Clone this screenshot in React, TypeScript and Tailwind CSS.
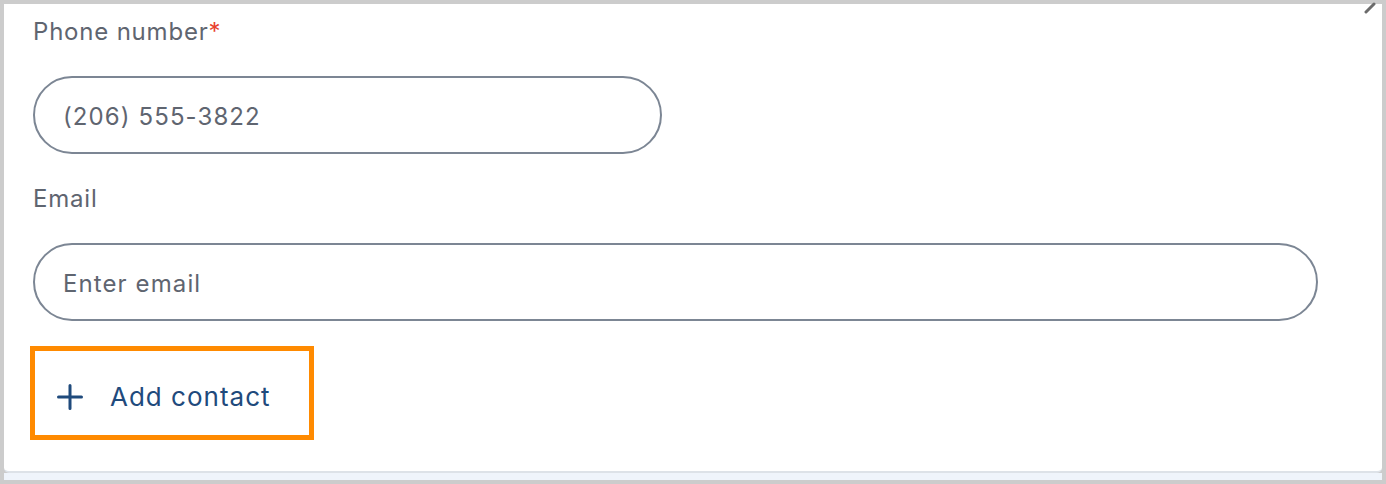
import { useState } from 'react';

const Field = ({
  label,
  required,
  value,
  placeholder,
  width,
}: {
  label: string;
  required?: boolean;
  value?: string;
  placeholder?: string;
  width: string;
}) => {
  const [text, setText] = useState(value ?? '');
  return (
    <div className="flex flex-col pb-[28px]">
      <label className="pt-[2px] text-[24px] leading-[30px] tracking-[0.8px] text-[#5f6570]">
        {label}
        {required && <span className="text-[#e8412f]">*</span>}
      </label>
      <input
        type="text"
        value={text}
        placeholder={placeholder}
        onChange={(e) => setText(e.target.value)}
        className={`${width} mt-[29px] h-[78px] rounded-full border-2 border-[#7c8694] bg-white px-[28px] pt-[2px] text-[24px] tracking-[1.1px] text-[#5f6570] placeholder:text-[#5f6570] focus:outline-none`}
      />
    </div>
  );
};

export default function App() {
  return (
    <div className="h-[484px] w-[1386px] bg-[#cccccc] px-[4px] pt-[4px] font-['Inter','Liberation_Sans',sans-serif]">
      <div className="relative h-[469px] rounded-b-[5px] border-b-2 border-[#dde2e8] bg-white pl-[29px] pt-[11px]">
        <svg className="absolute right-[6px] top-[-2px]" width="12" height="12" viewBox="0 0 12 12">
          <path d="M2 10 L10 2" stroke="#6b6b6b" strokeWidth="3" strokeLinecap="round" />
        </svg>
        <Field label="Phone number" required value="(206) 555-3822" width="w-[629px]" />
        <Field label="Email" placeholder="Enter email" width="w-[1285px]" />
        <button className="-ml-[3px] -mt-[3px] flex h-[94px] w-[284px] items-center border-[5px] border-[#ff8a00] pl-[22px] pt-[7px] text-[26px] tracking-[1px] text-[#1f4a7c]">
          <svg width="26" height="26" viewBox="0 0 26 26" className="mr-[27px]">
            <path d="M13 1.5 V24.5 M1.5 13 H24.5" stroke="#1f4a7c" strokeWidth="3" strokeLinecap="round" />
          </svg>
          Add contact
        </button>
      </div>
      <div className="h-[7px] bg-[#eff4fb]" />
    </div>
  );
}
